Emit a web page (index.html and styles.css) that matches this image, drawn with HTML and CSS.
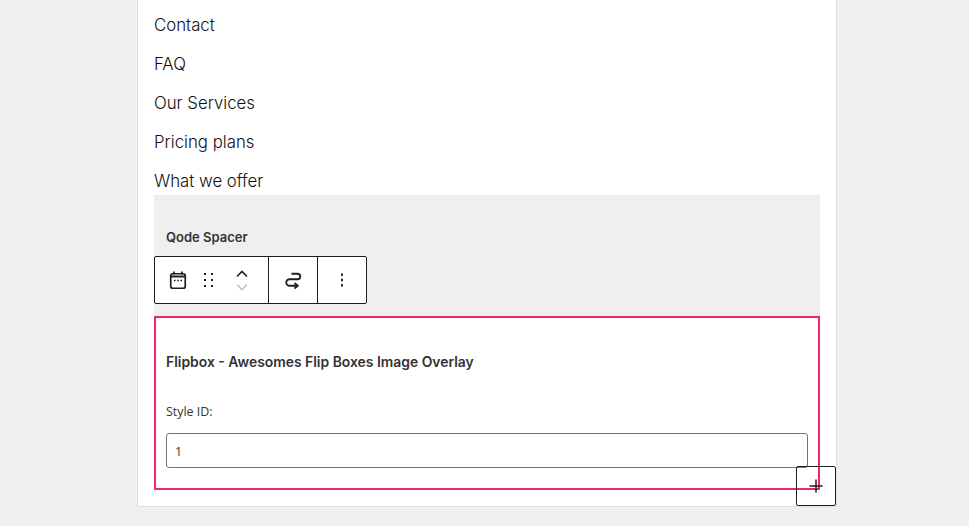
FILE: index.html
```html
<!DOCTYPE html>
<html lang="en">
<head>
<meta charset="utf-8">
<title>Editor</title>
<link rel="stylesheet" href="styles.css">
</head>
<body>
<main class="card">
  <ul class="nav-list">
    <li>Contact</li>
    <li>FAQ</li>
    <li>Our Services</li>
    <li>Pricing plans</li>
    <li>What we offer</li>
  </ul>
  <section class="spacer">
    <h2 class="spacer-title">Qode Spacer</h2>
    <div class="toolbar">
      <div class="tool-group first">
        <svg class="ic-cal" width="24" height="24" viewBox="0 0 24 24" fill="none" stroke="#1e1e1e" stroke-width="1.7"><rect x="4.75" y="5.75" width="14.5" height="14.5" rx="2"/><path d="M4.75 8.5h14.5" stroke-width="2"/><path d="M8 3.5v3M16 3.5v3"/><path d="M8 12.5h1.6M11.2 12.5h1.6M14.4 12.5h1.6" stroke-width="1.6"/></svg>
        <svg class="ic-drag" width="24" height="24" viewBox="0 0 24 24" fill="#1e1e1e"><rect x="8" y="5" width="2" height="2"/><rect x="15" y="5" width="2" height="2"/><rect x="8" y="11" width="2" height="2"/><rect x="15" y="11" width="2" height="2"/><rect x="8" y="17" width="2" height="2"/><rect x="15" y="17" width="2" height="2"/></svg>
        <div class="movers">
          <svg width="24" height="14" viewBox="0 0 24 14" fill="none" stroke="#1e1e1e" stroke-width="1.6"><path d="M7 10.5l5-5 5 5"/></svg>
          <svg width="24" height="14" viewBox="0 0 24 14" fill="none" stroke="#c4c4c4" stroke-width="1.6"><path d="M7 4.5l5 5 5-5"/></svg>
        </div>
      </div>
      <div class="tool-group transform">
        <svg width="24" height="24" viewBox="0 0 24 24" fill="none" stroke="#1e1e1e" stroke-width="1.8"><path d="M10.5 5.75h6a2.75 2.75 0 0 1 0 5.5h-8a3.25 3.25 0 0 0 0 6.5H17"/><path d="M13.5 15l3.2 2.75-3.2 2.75"/></svg>
      </div>
      <div class="tool-group more">
        <svg width="24" height="24" viewBox="0 0 24 24" fill="#1e1e1e"><rect x="11" y="5.5" width="2" height="2.4"/><rect x="11" y="10.8" width="2" height="2.4"/><rect x="11" y="16.1" width="2" height="2.4"/></svg>
      </div>
    </div>
  </section>
  <section class="flipbox">
    <h2 class="flip-title">Flipbox - Awesomes Flip Boxes Image Overlay</h2>
    <label class="field-label" for="style-id">Style ID:</label>
    <input class="field-input" id="style-id" type="text" value="1">
    <button class="add-btn" type="button" aria-label="Add block">
      <svg width="24" height="24" viewBox="0 0 24 24" fill="#1e1e1e"><path d="M11.25 5.5h1.5v5.75h5.75v1.5h-5.75v5.75h-1.5v-5.75H5.5v-1.5h5.75z"/></svg>
    </button>
  </section>
</main>
</body>
</html>
```

FILE: styles.css
```css
* { box-sizing: border-box; }
html, body { margin: 0; height: 526px; overflow: hidden; }
body {
  background: #f0f0f1;
  font-family: "Inter", "Liberation Sans", sans-serif;
  color: #1e1e1e;
}
.card {
  width: 700px;
  height: 507px;
  margin-left: 137px;
  padding: 0 16px;
  background: #fff;
  border: 1px solid #e0e0e0;
  border-top: 0;
}
.nav-list {
  display: flex;
  flex-direction: column;
  gap: 10px;
  height: 195px;
  margin: 0;
  padding: 11px 0 0;
  list-style: none;
}
.nav-list li {
  height: 29px;
  line-height: 29px;
  font-size: 16.8px;
  font-weight: 300;
  color: #111;
}
.spacer {
  height: 121px;
  padding-top: 33px;
  background: #efefef;
}
.spacer-title {
  margin: 0 0 10px 12px;
  height: 18px;
  line-height: 18px;
  font-size: 13px;
  font-weight: 600;
  color: #333;
}
.toolbar {
  display: flex;
  width: 213px;
  height: 48px;
  background: #fff;
  border: 1px solid #1e1e1e;
  border-radius: 2px;
}
.tool-group {
  display: flex;
  align-items: center;
  justify-content: center;
  height: 100%;
}
.first {
  width: 114px;
  padding-left: 11px;
  justify-content: flex-start;
  border-right: 1px solid #1e1e1e;
}
.ic-drag { margin-left: 6px; }
.movers {
  display: flex;
  flex-direction: column;
  margin-left: 10px;
}
.transform {
  width: 49px;
  border-right: 1px solid #1e1e1e;
}
.more { width: 48px; }
.flipbox {
  position: relative;
  height: 174px;
  padding: 34px 10px 0;
  border: 2px solid #ee2a5c;
}
.flip-title {
  margin: 0 0 30px;
  height: 20px;
  line-height: 20px;
  font-size: 13.9px;
  font-weight: 600;
  color: #333;
}
.field-label {
  display: block;
  height: 20px;
  margin-bottom: 11px;
  line-height: 20px;
  font-family: "Open Sans", sans-serif;
  font-size: 12.4px;
  color: #2c3338;
}
.field-input {
  display: block;
  width: 642px;
  height: 35px;
  padding: 2px 8px 0;
  font-family: "Open Sans", sans-serif;
  font-size: 12.4px;
  color: #2c3338;
  background: #fff;
  border: 1px solid #757575;
  border-radius: 3px;
}
.add-btn {
  position: absolute;
  top: 148px;
  right: -18px;
  display: flex;
  align-items: center;
  justify-content: center;
  width: 40px;
  height: 40px;
  padding: 0;
  background: transparent;
  border: 1px solid #1e1e1e;
  border-radius: 2px;
}
```
